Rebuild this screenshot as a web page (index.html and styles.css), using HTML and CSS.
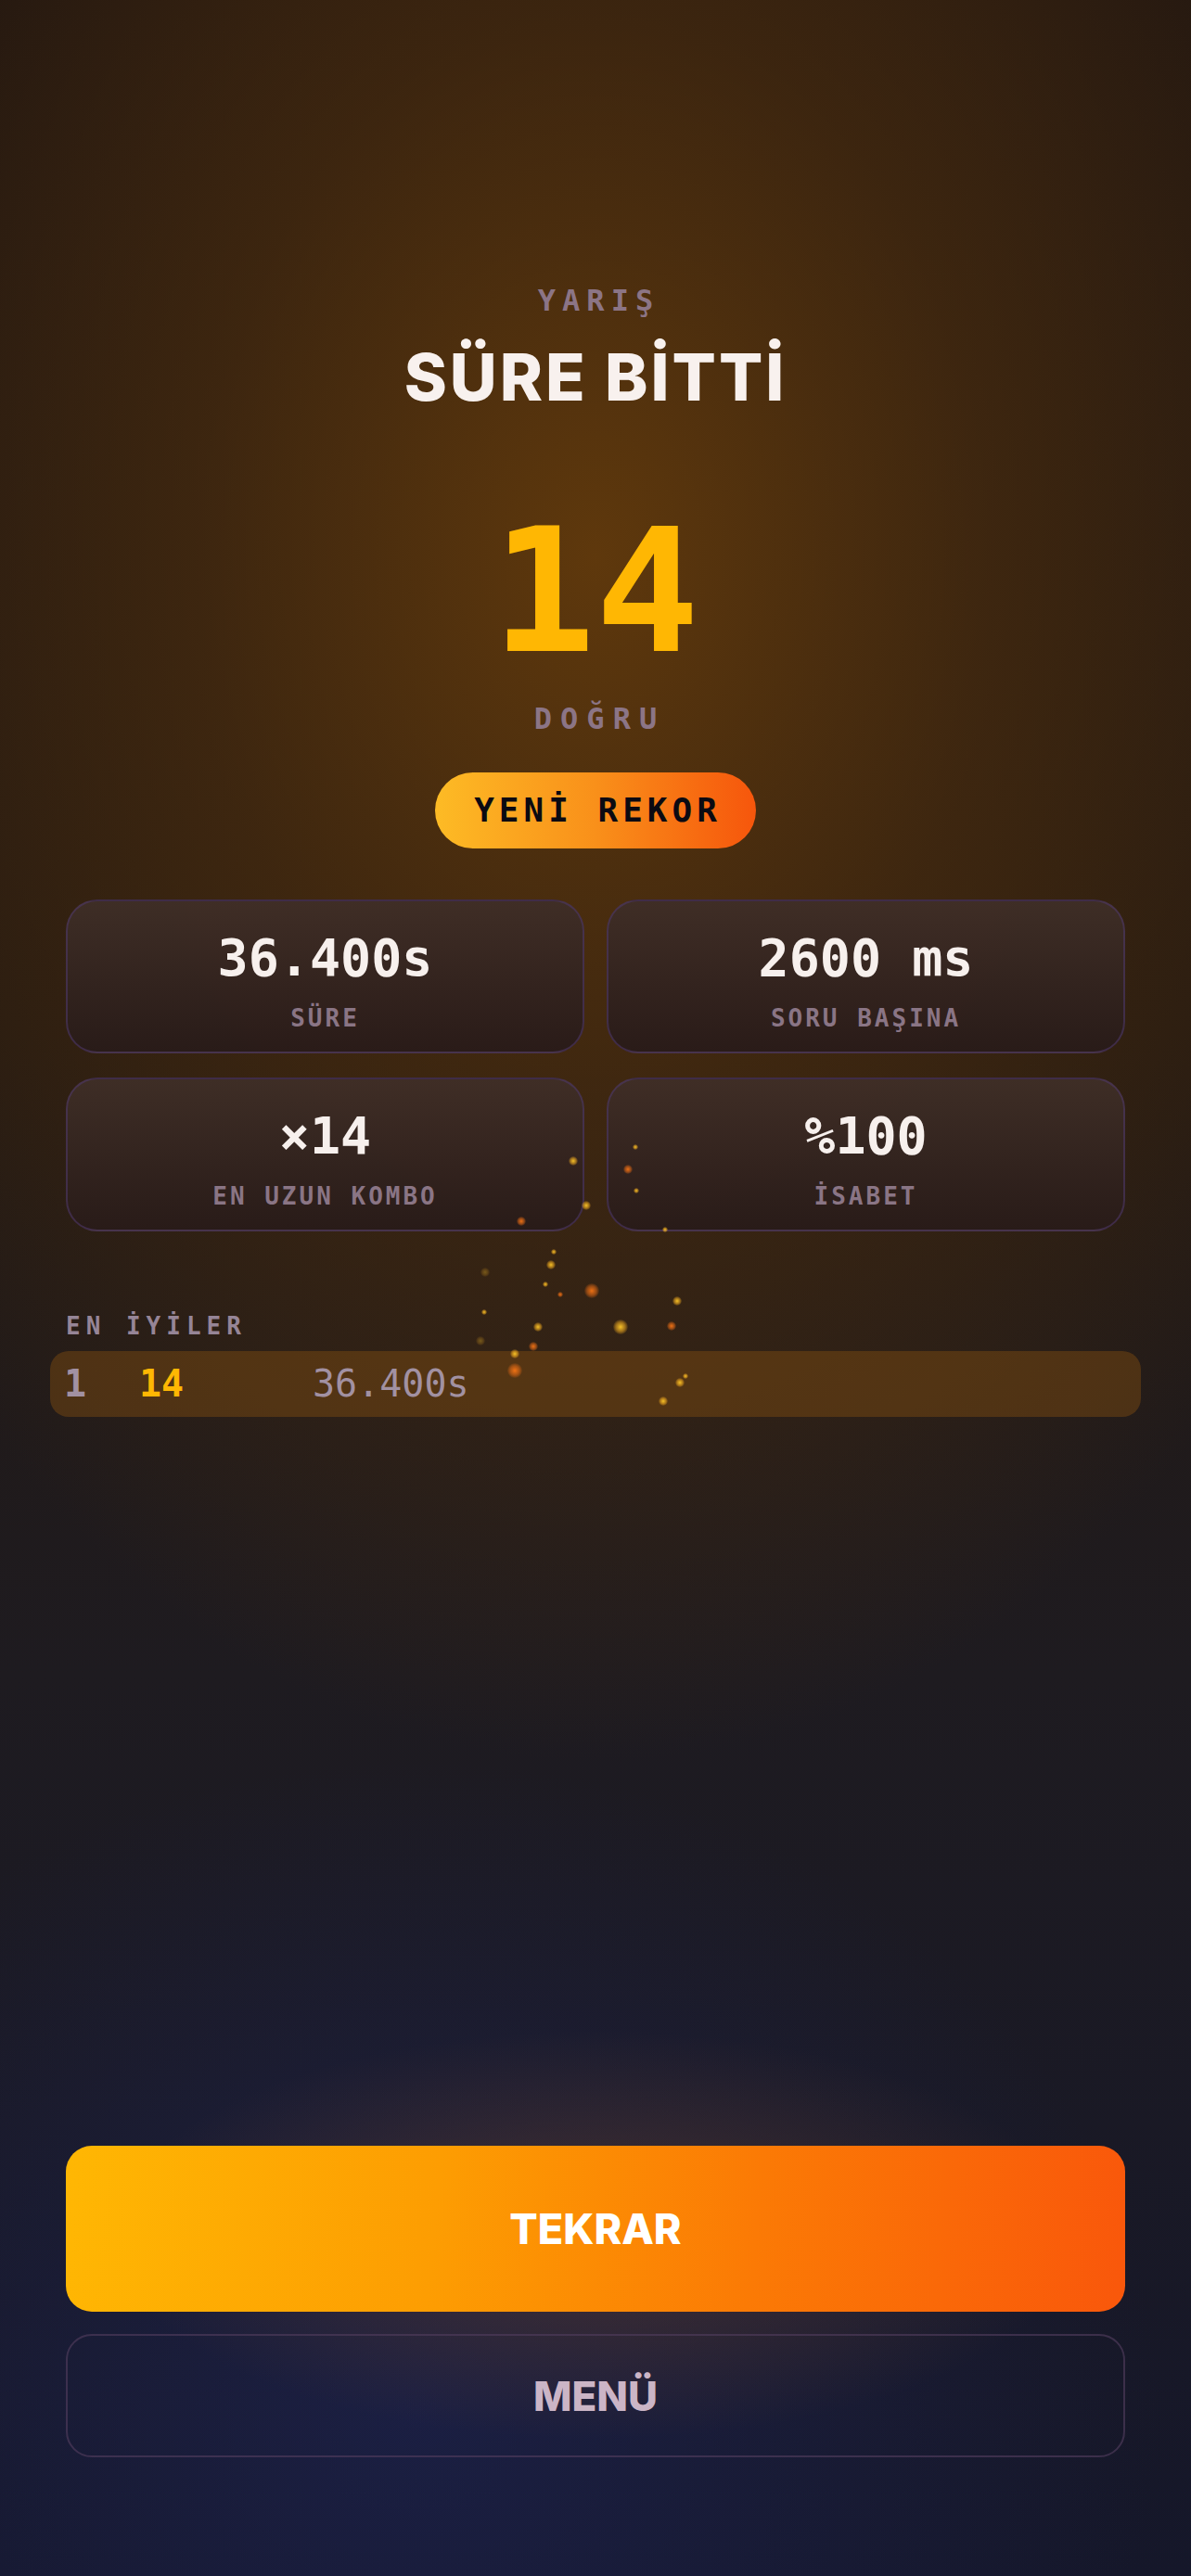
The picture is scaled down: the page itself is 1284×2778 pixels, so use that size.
FILE: index.html
```html
<!DOCTYPE html>
<html lang="tr">
<head>
  <meta charset="UTF-8">
  <title>Yarış - Süre Bitti</title>
  <link rel="stylesheet" href="styles.css">
</head>
<body>
  <div class="screen">
    <div class="head">
      <div class="mode">YARIŞ</div>
      <h1 class="title">SÜRE BİTTİ</h1>
      <div class="score">14</div>
      <div class="score-label">DOĞRU</div>
      <div class="record">YENİ REKOR</div>
    </div>

    <div class="stats">
      <div class="stat">
        <div class="stat-value">36.400s</div>
        <div class="stat-label">SÜRE</div>
      </div>
      <div class="stat">
        <div class="stat-value">2600 ms</div>
        <div class="stat-label">SORU BAŞINA</div>
      </div>
      <div class="stat">
        <div class="stat-value">×14</div>
        <div class="stat-label">EN UZUN KOMBO</div>
      </div>
      <div class="stat">
        <div class="stat-value">%100</div>
        <div class="stat-label">İSABET</div>
      </div>
    </div>

    <div class="best">
      <div class="best-title">EN İYİLER</div>
      <div class="best-row">
        <span class="rank">1</span>
        <span class="pts">14</span>
        <span class="time">36.400s</span>
      </div>
    </div>

    <div class="actions">
      <button class="btn btn-main">TEKRAR</button>
      <button class="btn btn-ghost">MENÜ</button>
    </div>
  </div>

  <!-- falling sparks over the cards -->
  <div class="sparks">
    <i class="dot y" style="left:618px;top:1252px"></i>
    <i class="dot o" style="left:677px;top:1261px"></i>
    <i class="dot s" style="left:685px;top:1237px"></i>
    <i class="dot y s" style="left:686px;top:1284px"></i>
    <i class="dot y" style="left:632px;top:1300px"></i>
    <i class="dot o" style="left:562px;top:1317px"></i>
    <i class="dot s" style="left:717px;top:1326px"></i>
    <i class="dot y s" style="left:597px;top:1350px"></i>
    <i class="dot y" style="left:594px;top:1364px"></i>
    <i class="dot d" style="left:523px;top:1372px"></i>
    <i class="dot o s" style="left:604px;top:1396px"></i>
    <i class="dot y s" style="left:588px;top:1385px"></i>
    <i class="dot o b" style="left:638px;top:1392px"></i>
    <i class="dot y" style="left:730px;top:1403px"></i>
    <i class="dot y s" style="left:522px;top:1415px"></i>
    <i class="dot y b" style="left:669px;top:1431px"></i>
    <i class="dot o" style="left:724px;top:1430px"></i>
    <i class="dot y" style="left:580px;top:1431px"></i>
    <i class="dot d" style="left:518px;top:1446px"></i>
    <i class="dot o" style="left:575px;top:1452px"></i>
    <i class="dot y" style="left:555px;top:1460px"></i>
    <i class="dot o b" style="left:555px;top:1478px"></i>
    <i class="dot y s" style="left:739px;top:1484px"></i>
    <i class="dot y" style="left:733px;top:1491px"></i>
    <i class="dot y" style="left:715px;top:1511px"></i>
  </div>
</body>
</html>
```

FILE: styles.css
```css
html, body {
  margin: 0;
  padding: 0;
}
body {
  width: 1284px;
  height: 2778px;
  position: relative;
  overflow: hidden;
  font-family: "DejaVu Sans Mono", monospace;
  background:
    radial-gradient(ellipse 520px 220px at 50% 2410px, rgba(120, 72, 40, 0.45), rgba(120, 72, 40, 0) 100%),
    radial-gradient(ellipse 950px 1300px at 50% 600px, rgba(98, 58, 12, 0.95) 0%, rgba(80, 48, 14, 0.6) 45%, rgba(60, 40, 20, 0) 100%),
    radial-gradient(ellipse 800px 700px at 35% 2600px, rgba(30, 36, 84, 0.6), rgba(30, 36, 84, 0) 100%),
    linear-gradient(180deg, #1d1411 0%, #231912 40%, #1e1b20 65%, #15172a 100%);
}
.screen {
  height: 100%;
  box-sizing: border-box;
  padding: 0 71px 128px;
  display: flex;
  flex-direction: column;
}
.head {
  display: flex;
  flex-direction: column;
  align-items: center;
  padding-top: 304px;
}
.mode {
  font-size: 32px;
  line-height: 40px;
  font-weight: bold;
  letter-spacing: 7px;
  color: #8c7586;
  margin-right: -7px;
}
.title {
  margin: 23px 0 0;
  font-family: Inter, "Liberation Sans", sans-serif;
  font-size: 70px;
  line-height: 80px;
  font-weight: 800;
  letter-spacing: 3px;
  color: #f8f1ee;
}
.score {
  margin-top: 96px;
  font-size: 186px;
  line-height: 190px;
  font-weight: bold;
  color: #ffb703;
}
.score-label {
  margin-top: 22px;
  font-size: 32px;
  line-height: 40px;
  font-weight: bold;
  letter-spacing: 9px;
  margin-right: -9px;
  color: #8c7586;
}
.record {
  margin-top: 38px;
  height: 82px;
  line-height: 82px;
  padding: 0 37px 0 42px;
  border-radius: 41px;
  font-size: 36px;
  font-weight: bold;
  letter-spacing: 5px;
  color: #0b0a12;
  background: linear-gradient(90deg, #fdbb25 0%, #f9901a 50%, #f6560c 100%);
}
.stats {
  margin-top: 55px;
  display: grid;
  grid-template-columns: 1fr 1fr;
  column-gap: 24px;
  row-gap: 26px;
}
.stat {
  height: 166px;
  box-sizing: border-box;
  padding-top: 29px;
  border: 2px solid rgba(78, 56, 104, 0.6);
  border-radius: 34px;
  background: linear-gradient(180deg, rgba(63, 46, 39, 0.97) 0%, rgba(41, 27, 25, 0.97) 100%);
  text-align: center;
}
.stat-value {
  font-size: 55px;
  line-height: 64px;
  font-weight: bold;
  color: #f7f0ed;
}
.stat-label {
  margin-top: 17px;
  font-size: 26px;
  line-height: 32px;
  font-weight: bold;
  letter-spacing: 3px;
  color: #8a7585;
}
.best {
  margin-top: 86px;
}
.best-title {
  font-size: 26px;
  line-height: 32px;
  font-weight: bold;
  letter-spacing: 6px;
  color: #968597;
}
.best-row {
  margin: 11px -17px 0;
  height: 71px;
  padding-left: 15px;
  display: grid;
  grid-template-columns: 81px 187px 1fr;
  align-items: center;
  border-radius: 20px;
  background: rgba(135, 82, 16, 0.42);
  font-size: 40px;
  line-height: 71px;
  color: #a291a2;
}
.rank {
  font-weight: bold;
}
.pts {
  font-weight: bold;
  color: #ffb703;
}
.actions {
  margin-top: auto;
  display: flex;
  flex-direction: column;
  gap: 24px;
}
.btn {
  display: block;
  width: 100%;
  font-family: Inter, "Liberation Sans", sans-serif;
  font-weight: 800;
  border-radius: 28px;
  cursor: pointer;
}
.btn-main {
  height: 179px;
  border: none;
  font-size: 45px;
  color: #ffffff;
  background: linear-gradient(95deg, #ffb703 0%, #fd9d02 35%, #fb7a05 65%, #f9570b 100%);
}
.btn-ghost {
  height: 133px;
  font-size: 44px;
  color: #cbb5c6;
  background: transparent;
  border: 2px solid rgba(80, 60, 92, 0.65);
}
.sparks {
  position: absolute;
  inset: 0;
  pointer-events: none;
}
.dot {
  position: absolute;
  width: 10px;
  height: 10px;
  margin: -5px 0 0 -5px;
  border-radius: 50%;
  background: radial-gradient(circle, rgba(255, 200, 40, 0.95) 0%, rgba(255, 180, 30, 0.5) 45%, rgba(255, 170, 30, 0) 75%);
}
.dot.o {
  background: radial-gradient(circle, rgba(255, 120, 20, 0.9) 0%, rgba(240, 110, 20, 0.5) 45%, rgba(240, 110, 20, 0) 75%);
}
.dot.d {
  opacity: 0.35;
}
.dot.s {
  width: 6px;
  height: 6px;
  margin: -3px 0 0 -3px;
}
.dot.b {
  width: 16px;
  height: 16px;
  margin: -8px 0 0 -8px;
}
```
